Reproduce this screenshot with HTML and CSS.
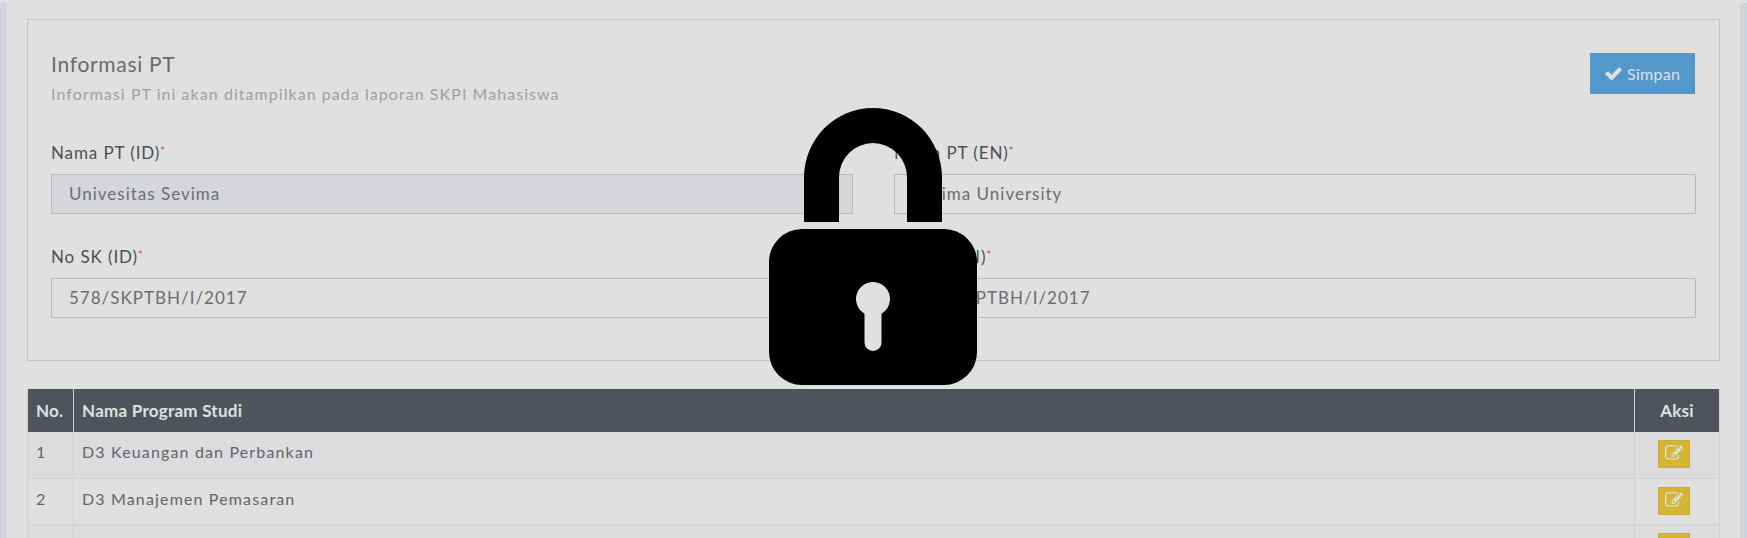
FILE: index.html
```html
<!DOCTYPE html>
<html lang="en">
<head>
    <meta charset="UTF-8">
    <meta name="viewport" content="width=device-width, initial-scale=1.0">
    <title>Informasi PT</title>
    <link rel="stylesheet" href="styles.css">
</head>
<body>
    <div class="page">
        <div class="side-strip"></div>
        <main class="main">
            <section class="panel">
                <div class="panel-head">
                    <div>
                        <h2 class="panel-title">Informasi PT</h2>
                        <p class="panel-sub">Informasi PT ini akan ditampilkan pada laporan SKPI Mahasiswa</p>
                    </div>
                    <button class="btn-save">
                        <svg class="icon-check" viewBox="0 0 1792 1792"><path fill="currentColor" d="M1671 566q0 40-28 68l-724 724-136 136q-28 28-68 28t-68-28l-136-136-362-362q-28-28-28-68t28-68l136-136q28-28 68-28t68 28l294 295 656-657q28-28 68-28t68 28l136 136q28 28 28 68z"/></svg>
                        Simpan
                    </button>
                </div>
                <div class="form-grid">
                    <div class="field">
                        <label class="field-label">Nama PT (ID)<span class="req">*</span></label>
                        <input class="field-input" type="text" value="Univesitas Sevima" disabled>
                    </div>
                    <div class="field">
                        <label class="field-label">Nama PT (EN)<span class="req">*</span></label>
                        <input class="field-input" type="text" value="Sevima University">
                    </div>
                    <div class="field">
                        <label class="field-label">No SK (ID)<span class="req">*</span></label>
                        <input class="field-input" type="text" value="578/SKPTBH/I/2017">
                    </div>
                    <div class="field">
                        <label class="field-label">No SK (EN)<span class="req">*</span></label>
                        <input class="field-input" type="text" value="578/SKPTBH/I/2017">
                    </div>
                </div>
            </section>

            <table class="prodi-table">
                <thead>
                    <tr>
                        <th class="col-no">No.</th>
                        <th class="col-name">Nama Program Studi</th>
                        <th class="col-aksi">Aksi</th>
                    </tr>
                </thead>
                <tbody>
                    <tr class="row-odd">
                        <td>1</td>
                        <td>D3 Keuangan dan Perbankan</td>
                        <td class="cell-aksi"><button class="btn-edit"><svg class="icon-edit" viewBox="0 0 1792 1792"><path fill="currentColor" d="M888 1184l116-116-152-152-116 116v56h96v96h56zm440-720q-16-16-33 1l-350 350q-17 17-1 33t33-1l350-350q17-17 1-33zm80 594v190q0 119-84.5 203.5t-203.5 84.5h-832q-119 0-203.5-84.5t-84.5-203.5v-832q0-119 84.5-203.5t203.5-84.5h832q63 0 117 25 15 7 18 23 3 17-9 29l-49 49q-14 14-32 8-23-6-45-6h-832q-66 0-113 47t-47 113v832q0 66 47 113t113 47h832q66 0 113-47t47-113v-126q0-13 9-22l64-64q15-15 35-7t20 29zm-96-738l288 288-672 672h-288v-288zm444 132l-92 92-288-288 92-92q28-28 68-28t68 28l152 152q28 28 28 68t-28 68z"/></svg></button></td>
                    </tr>
                    <tr>
                        <td>2</td>
                        <td>D3 Manajemen Pemasaran</td>
                        <td class="cell-aksi"><button class="btn-edit"><svg class="icon-edit" viewBox="0 0 1792 1792"><path fill="currentColor" d="M888 1184l116-116-152-152-116 116v56h96v96h56zm440-720q-16-16-33 1l-350 350q-17 17-1 33t33-1l350-350q17-17 1-33zm80 594v190q0 119-84.5 203.5t-203.5 84.5h-832q-119 0-203.5-84.5t-84.5-203.5v-832q0-119 84.5-203.5t203.5-84.5h832q63 0 117 25 15 7 18 23 3 17-9 29l-49 49q-14 14-32 8-23-6-45-6h-832q-66 0-113 47t-47 113v832q0 66 47 113t113 47h832q66 0 113-47t47-113v-126q0-13 9-22l64-64q15-15 35-7t20 29zm-96-738l288 288-672 672h-288v-288zm444 132l-92 92-288-288 92-92q28-28 68-28t68 28l152 152q28 28 28 68t-28 68z"/></svg></button></td>
                    </tr>
                    <tr class="row-odd">
                        <td></td>
                        <td></td>
                        <td class="cell-aksi"><button class="btn-edit"><svg class="icon-edit" viewBox="0 0 1792 1792"><path fill="currentColor" d="M888 1184l116-116-152-152-116 116v56h96v96h56zm440-720q-16-16-33 1l-350 350q-17 17-1 33t33-1l350-350q17-17 1-33zm80 594v190q0 119-84.5 203.5t-203.5 84.5h-832q-119 0-203.5-84.5t-84.5-203.5v-832q0-119 84.5-203.5t203.5-84.5h832q63 0 117 25 15 7 18 23 3 17-9 29l-49 49q-14 14-32 8-23-6-45-6h-832q-66 0-113 47t-47 113v832q0 66 47 113t113 47h832q66 0 113-47t47-113v-126q0-13 9-22l64-64q15-15 35-7t20 29zm-96-738l288 288-672 672h-288v-288zm444 132l-92 92-288-288 92-92q28-28 68-28t68 28l152 152q28 28 28 68t-28 68z"/></svg></button></td>
                    </tr>
                </tbody>
            </table>
        </main>
        <div class="side-strip"></div>
    </div>

    <!-- Locked overlay -->
    <div class="lock-overlay">
        <svg class="lock-icon" viewBox="0 0 208 277">
            <path fill="#000" d="M35 114V69.500A69 69.500 0 0 1 173 69.500V114H138V69.500A34 34.500 0 0 0 70 69.500V114Z"/>
            <path fill="#000" fill-rule="evenodd" d="M33 121H175A33 33 0 0 1 208 154V244A33 33 0 0 1 175 277H33A33 33 0 0 1 0 244V154A33 33 0 0 1 33 121ZM104 174A17 17 0 0 0 95.500 205.700V234.500A8.500 8.500 0 0 0 112.500 234.500V205.700A17 17 0 0 0 104 174Z"/>
        </svg>
    </div>
</body>
</html>
```

FILE: styles.css
```css
* {
    box-sizing: border-box;
}
html, body {
    margin: 0;
    height: 100%;
    overflow: hidden;
}
body {
    font-family: Lato, "Noto Sans", sans-serif;
    font-size: 16px;
    color: #6f7278;
    background: #fff;
}
.page {
    display: flex;
    height: 100vh;
}
.side-strip {
    width: 7px;
    flex: none;
    margin-top: 3px;
    background: #edf1f8;
}
.main {
    flex: 1;
    min-width: 0;
    padding: 19px 20px 0;
}
.panel {
    height: 342px;
    padding: 33px 23px 0;
    border: 1px solid #dedede;
    margin-bottom: 28px;
}
.panel-head {
    display: flex;
    justify-content: space-between;
    align-items: flex-start;
    height: 90px;
}
.panel-title {
    margin: -1px 0 0;
    font-size: 21px;
    font-weight: 400;
    line-height: 24px;
    letter-spacing: .7px;
    color: #797979;
}
.panel-sub {
    margin: 8px 0 0;
    font-size: 16px;
    line-height: 20px;
    letter-spacing: 1.05px;
    color: #b0b6bf;
}
.btn-save {
    display: flex;
    align-items: center;
    gap: 4px;
    width: 105px;
    height: 41px;
    margin-right: 1px;
    padding: 0 0 0 13px;
    border: 1px solid #5fade6;
    background: #5fade6;
    color: #fff;
    font: inherit;
    letter-spacing: .3px;
}
.icon-check {
    width: 19px;
    height: 19px;
}
.form-grid {
    display: grid;
    grid-template-columns: 1fr 1fr;
    column-gap: 41px;
    row-gap: 33px;
}
.field {
    display: flex;
    flex-direction: column;
    gap: 9px;
}
.field-label {
    font-size: 17px;
    line-height: 20px;
    letter-spacing: .9px;
    color: #555a62;
}
.req {
    position: relative;
    top: -4px;
    font-size: 11px;
    color: #f2506a;
}
.field-input {
    width: 100%;
    height: 40px;
    padding: 0 17px 2px;
    border: 1px solid #cdd5df;
    background: transparent;
    font: inherit;
    font-size: 17px;
    letter-spacing: 1px;
    color: #7a7d83;
}
.field-input:disabled {
    background: #f2f4f9;
    color: #7a7d83;
}
.prodi-table {
    width: 100%;
    border-collapse: collapse;
    table-layout: fixed;
}
.prodi-table th {
    height: 43px;
    padding: 0 8px;
    background: #5b5f67;
    color: #fff;
    font-size: 17px;
    font-weight: 700;
    text-align: left;
    letter-spacing: .25px;
    border: 1px solid #ededed;
    border-top: 0;
    border-bottom: 0;
}
.prodi-table td {
    height: 46px;
    padding: 0 8px 6px;
    border: 1px solid #eceef3;
    border-top: 0;
    letter-spacing: 1.15px;
    color: #6f7278;
}
.col-no {
    width: 46px;
}
.col-aksi {
    width: 85px;
    text-align: center !important;
}
.row-odd {
    background: #fbfbfe;
}
.prodi-table .cell-aksi {
    padding: 0 7px 0 0;
    text-align: center;
    vertical-align: top;
}
.btn-edit {
    display: inline-flex;
    align-items: center;
    justify-content: center;
    width: 32px;
    height: 28px;
    margin-top: 8px;
    padding: 0 0 2px;
    border: 1px solid #e3c33e;
    background: #f2ce3c;
    color: #fff;
}
.icon-edit {
    width: 18px;
    height: 18px;
}
.lock-overlay {
    position: fixed;
    inset: 0;
    display: flex;
    justify-content: center;
    padding-top: 108px;
    background: rgba(0, 0, 0, .12);
}
.lock-icon {
    width: 208px;
    height: 277px;
    margin-right: 1px;
}
```
